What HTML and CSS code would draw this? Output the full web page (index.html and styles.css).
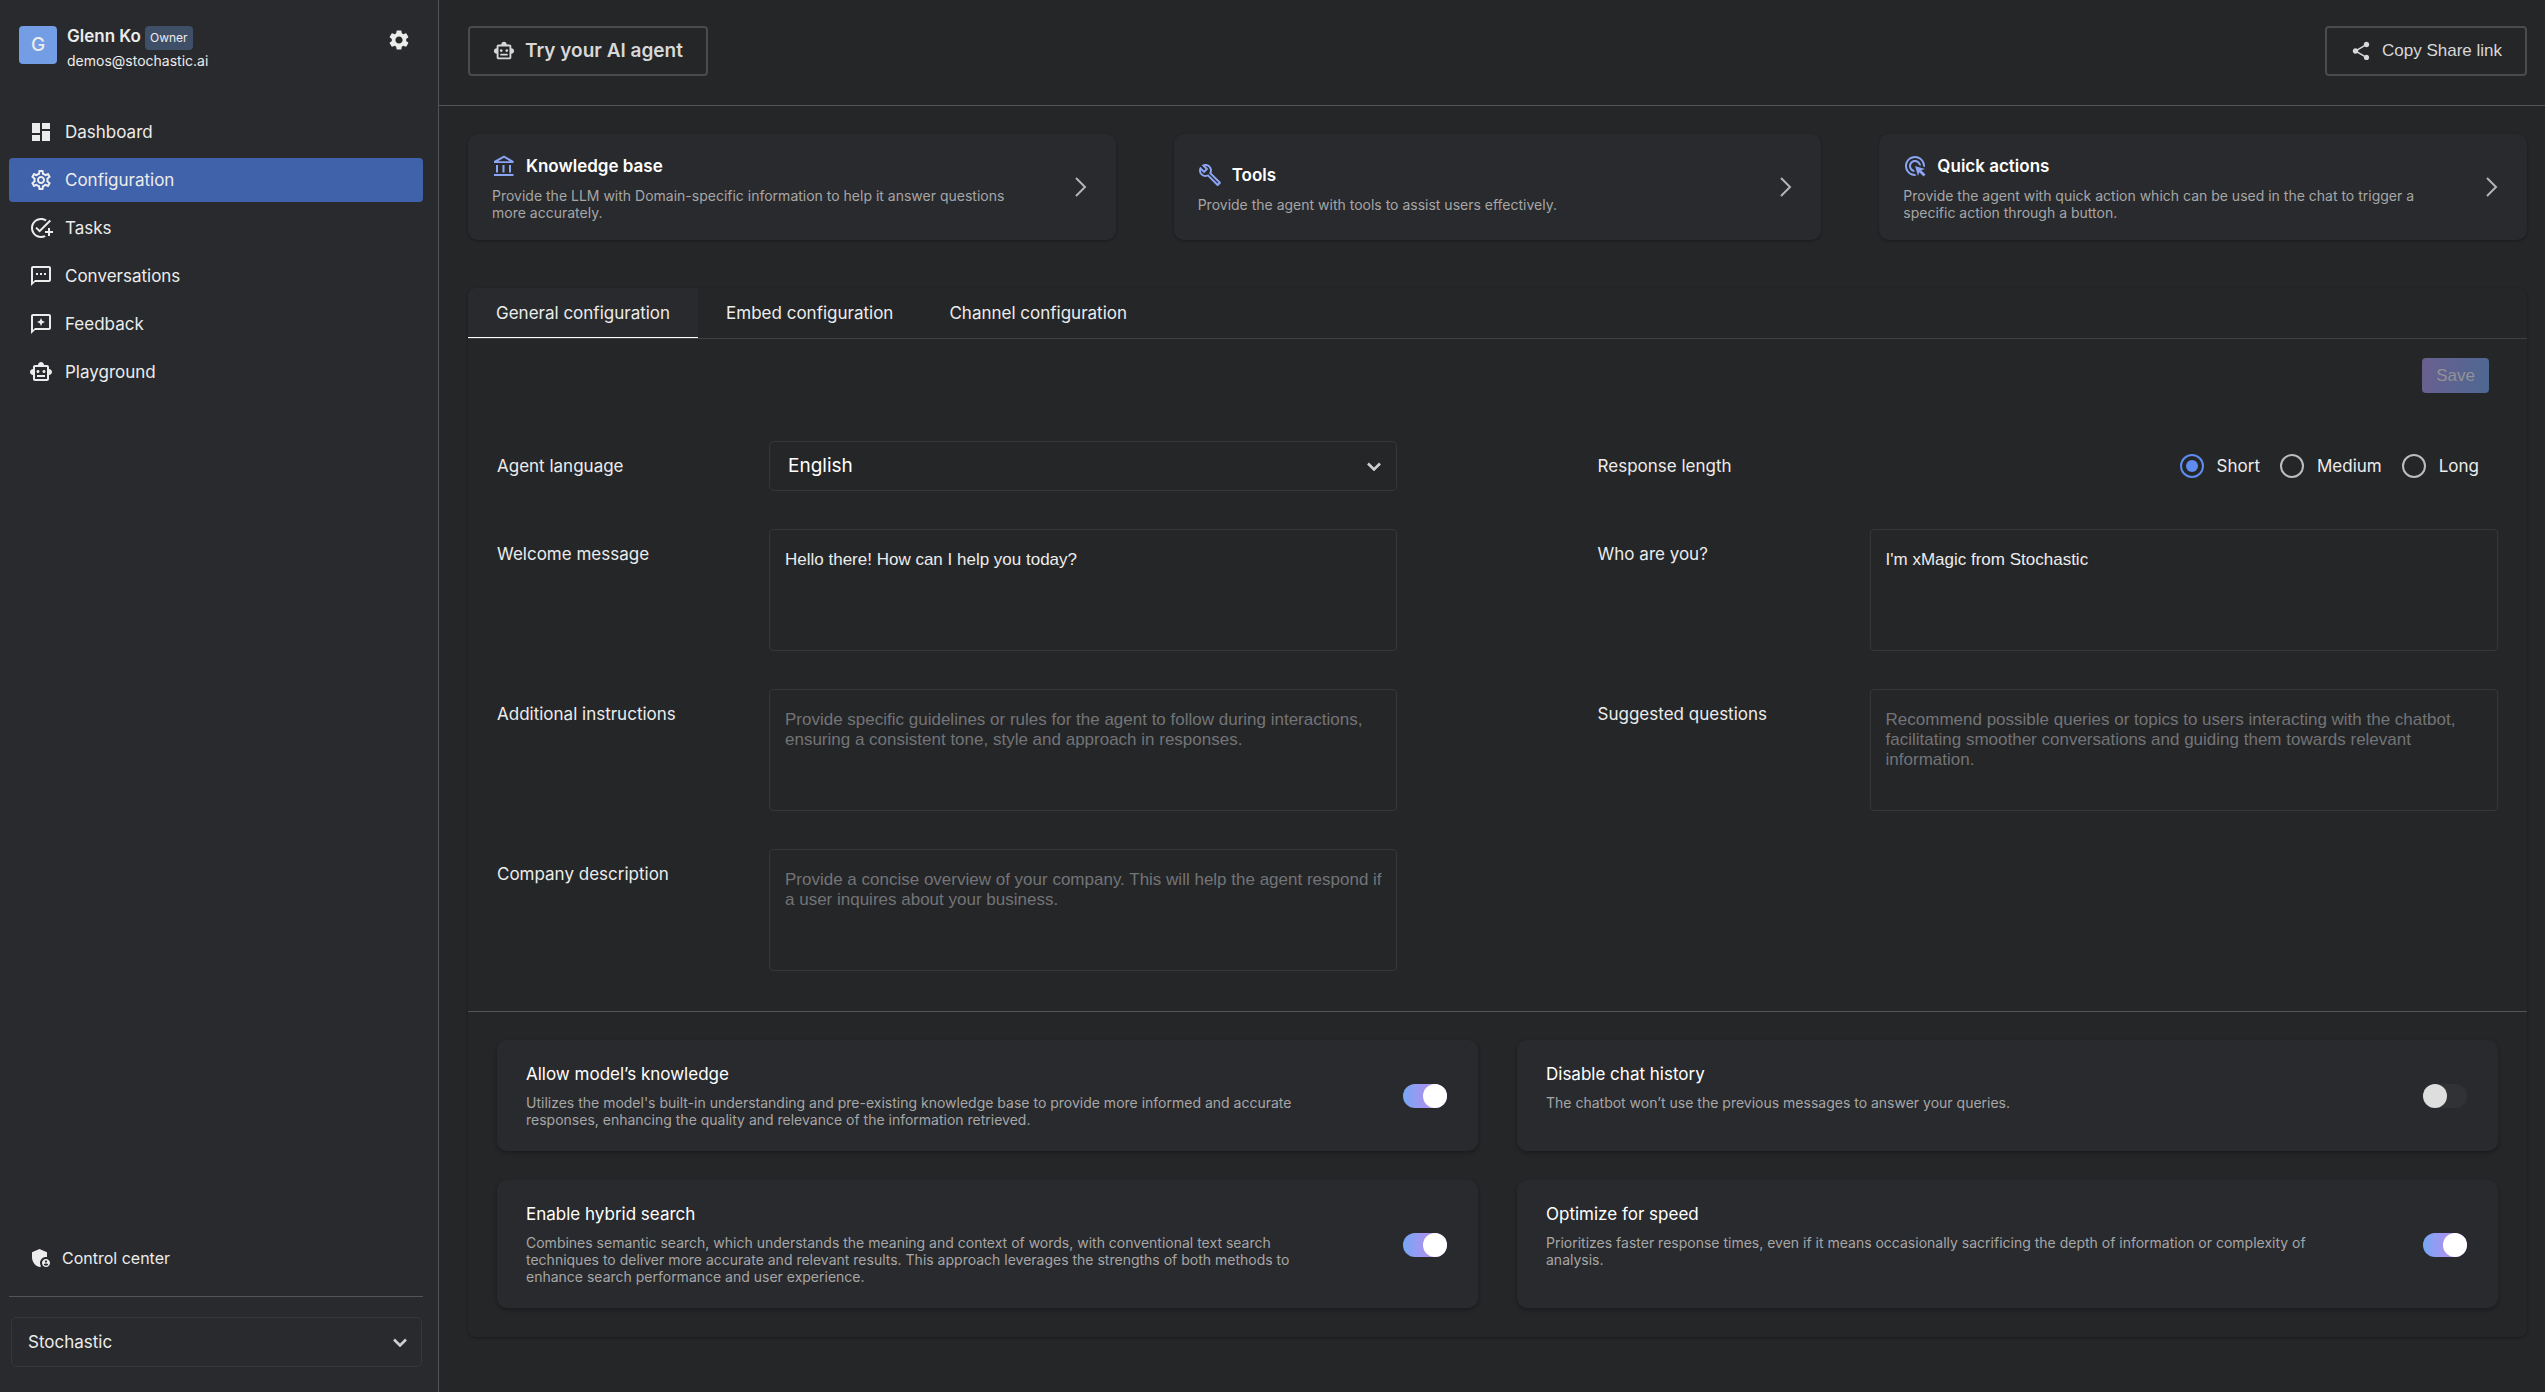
FILE: index.html
```html
<!DOCTYPE html>
<html lang="en">
<head>
<meta charset="utf-8">
<meta name="viewport" content="width=device-width, initial-scale=1">
<title>Configuration</title>
<link rel="stylesheet" href="styles.css">
</head>
<body>
<svg class="sprite" aria-hidden="true">
  <symbol id="i-robot" viewBox="0 0 24 24"><path d="M20 9V7c0-1.1-.9-2-2-2h-3c0-1.66-1.34-3-3-3S9 3.34 9 5H6c-1.1 0-2 .9-2 2v2c-1.66 0-3 1.34-3 3s1.34 3 3 3v4c0 1.1.9 2 2 2h12c1.1 0 2-.9 2-2v-4c1.66 0 3-1.34 3-3s-1.34-3-3-3zm-2 10H6V7h12v12zm-9-6c-.83 0-1.5-.67-1.5-1.5S8.17 10 9 10s1.5.67 1.5 1.5S9.83 13 9 13zm7.5-1.5c0 .83-.67 1.5-1.5 1.5s-1.5-.67-1.5-1.5.67-1.5 1.5-1.5 1.5.67 1.5 1.5zM8 15h8v2H8v-2z"/></symbol>
  <symbol id="i-next" viewBox="0 0 12 20"><path d="M1 1l9 9-9 9" fill="none" stroke="currentColor" stroke-width="2"/></symbol>
  <symbol id="i-down" viewBox="0 0 14 9"><path d="M1 1.500l6 6 6-6" fill="none" stroke="currentColor" stroke-width="2.600"/></symbol>
</svg>
<div class="app">
  <aside class="sidebar">
    <div class="profile">
      <span class="avatar">G</span>
      <div class="who">
        <div class="who-row"><span class="who-name">Glenn Ko</span><span class="badge">Owner</span></div>
        <div class="who-mail">demos@stochastic.ai</div>
      </div>
      <button class="icon-button" type="button" aria-label="Settings"><svg class="icon" viewBox="0 0 24 24"><path d="M19.14 12.94c.04-.3.06-.61.06-.94 0-.32-.02-.64-.07-.94l2.03-1.58c.18-.14.23-.41.12-.61l-1.92-3.32c-.12-.22-.37-.29-.59-.22l-2.39.96c-.5-.38-1.03-.7-1.62-.94l-.36-2.54c-.04-.24-.24-.41-.48-.41h-3.84c-.24 0-.43.17-.47.41l-.36 2.54c-.59.24-1.13.57-1.62.94l-2.39-.96c-.22-.08-.47 0-.59.22L2.74 8.87c-.12.21-.08.47.12.61l2.03 1.58c-.05.3-.09.63-.09.94s.02.64.07.94l-2.03 1.58c-.18.14-.23.41-.12.61l1.92 3.32c.12.22.37.29.59.22l2.39-.96c.5.38 1.03.7 1.62.94l.36 2.54c.05.24.24.41.48.41h3.84c.24 0 .44-.17.47-.41l.36-2.54c.59-.24 1.13-.56 1.62-.94l2.39.96c.22.08.47 0 .59-.22l1.92-3.32c.12-.22.07-.47-.12-.61l-2.01-1.58zM12 15.6c-1.980 0-3.600-1.620-3.600-3.600s1.620-3.600 3.600-3.600 3.600 1.620 3.600 3.600-1.620 3.600-3.600 3.600z"/></svg></button>
    </div>
    <nav class="nav" aria-label="Main">
      <a class="nav-item" href="#dashboard"><svg class="icon" viewBox="0 0 24 24"><path d="M3 13h8V3H3v10zm0 8h8v-6H3v6zm10 0h8V11h-8v10zm0-18v6h8V3h-8z"/></svg>Dashboard</a>
      <a class="nav-item nav-item-active" href="#configuration" aria-current="page"><svg class="icon" viewBox="0 0 24 24"><path d="M19.43 12.98c.04-.32.07-.64.07-.98 0-.34-.03-.66-.07-.98l2.11-1.65c.19-.15.24-.42.12-.64l-2-3.46c-.09-.16-.26-.25-.44-.25-.06 0-.12.01-.17.03l-2.49 1c-.52-.4-1.08-.73-1.69-.98l-.38-2.65C14.46 2.18 14.25 2 14 2h-4c-.25 0-.46.18-.49.42l-.38 2.65c-.61.25-1.17.59-1.69.98l-2.49-1c-.06-.02-.12-.03-.18-.03-.17 0-.34.09-.43.25l-2 3.46c-.13.22-.07.49.12.64l2.11 1.65c-.04.32-.07.65-.07.98 0 .33.03.66.07.98l-2.11 1.65c-.19.15-.24.42-.12.64l2 3.46c.09.16.26.25.44.25.06 0 .12-.01.17-.03l2.49-1c.52.4 1.08.73 1.69.98l.38 2.65c.03.24.24.42.49.42h4c.25 0 .46-.18.49-.42l.38-2.65c.61-.25 1.17-.59 1.69-.98l2.49 1c.06.02.12.03.18.03.17 0 .34-.09.43-.25l2-3.46c.12-.22.07-.49-.12-.64l-2.11-1.65zm-1.98-1.71c.04.31.05.52.05.73 0 .21-.02.43-.05.73l-.14 1.13.89.7 1.08.84-.7 1.21-1.27-.51-1.04-.42-.9.68c-.43.32-.84.56-1.25.73l-1.06.43-.16 1.13-.2 1.35h-1.4l-.19-1.35-.16-1.13-1.06-.43c-.43-.18-.83-.41-1.23-.71l-.91-.7-1.06.43-1.27.51-.7-1.21 1.08-.84.89-.7-.14-1.13c-.03-.31-.05-.54-.05-.74s.02-.43.05-.73l.14-1.13-.89-.7-1.08-.84.7-1.21 1.27.51 1.04.42.9-.68c.43-.32.84-.56 1.25-.73l1.06-.43.16-1.13.2-1.35h1.39l.19 1.35.16 1.13 1.06.43c.43.18.83.41 1.23.71l.91.7 1.06-.43 1.27-.51.7 1.21-1.07.85-.89.7.14 1.13zM12 8c-2.21 0-4 1.79-4 4s1.79 4 4 4 4-1.79 4-4-1.79-4-4-4zm0 6c-1.1 0-2-.9-2-2s.9-2 2-2 2 .9 2 2-.9 2-2 2z"/></svg>Configuration</a>
      <a class="nav-item" href="#tasks"><svg class="icon" viewBox="0 0 24 24"><path d="M22 5.18 10.59 16.6l-4.24-4.24 1.41-1.41 2.83 2.83 10-10L22 5.18zM12 20c-4.42 0-8-3.58-8-8s3.58-8 8-8c1.57 0 3.04.46 4.28 1.25l1.45-1.45C16.1 2.67 14.13 2 12 2 6.48 2 2 6.48 2 12s4.48 10 10 10c1.73 0 3.36-.44 4.78-1.22l-1.5-1.5c-1 .46-2.11.72-3.28.72zm7-5h-3v2h3v3h2v-3h3v-2h-3v-3h-2v3z"/></svg>Tasks</a>
      <a class="nav-item" href="#conversations"><svg class="icon" viewBox="0 0 24 24"><path d="M20 2H4c-1.1 0-2 .9-2 2v18l4-4h14c1.1 0 2-.9 2-2V4c0-1.1-.9-2-2-2zm0 14H6l-2 2V4h16v12zM7 9h2v2H7zm4 0h2v2h-2zm4 0h2v2h-2z"/></svg>Conversations</a>
      <a class="nav-item" href="#feedback"><svg class="icon" viewBox="0 0 24 24"><path d="M20 2H4c-1.1 0-2 .9-2 2v18l4-4h14c1.1 0 2-.9 2-2V4c0-1.1-.9-2-2-2zm0 14H6l-2 2V4h16v12zM12 14l1.250-2.750L16 10l-2.750-1.250L12 6l-1.250 2.750L8 10l2.750 1.250z"/></svg>Feedback</a>
      <a class="nav-item" href="#playground"><svg class="icon"><use href="#i-robot"/></svg>Playground</a>
    </nav>
    <div class="sidebar-foot">
      <a class="nav-item nav-item-foot" href="#control-center"><svg class="icon" viewBox="0 0 24 24"><path d="M17 11c.34 0 .67.04 1 .09V6.27L10.5 3 3 6.27v4.91c0 4.54 3.2 8.79 7.5 9.820.550-.130 1.080-.320 1.600-.550-.690-.980-1.100-2.170-1.100-3.450 0-3.310 2.690-6 6-6z"/><path fill-rule="evenodd" d="M17 13c-2.210 0-4 1.790-4 4s1.790 4 4 4 4-1.790 4-4-1.790-4-4-4zm0 1.380c.620 0 1.120.510 1.120 1.120s-.510 1.120-1.120 1.120-1.120-.510-1.120-1.120.500-1.120 1.120-1.120zm0 5.370c-.930 0-1.740-.460-2.240-1.170.050-.720 1.510-1.080 2.240-1.080s2.190.360 2.240 1.080c-.500.710-1.310 1.170-2.240 1.170z"/></svg>Control center</a>
      <div class="select workspace">
        <select class="select-box" aria-label="Workspace"><option>Stochastic</option></select>
        <svg class="select-arrow"><use href="#i-down"/></svg>
      </div>
    </div>
  </aside>

  <main class="main">
    <header class="topbar">
      <button class="button button-strong" type="button"><svg class="button-icon"><use href="#i-robot"/></svg>Try your AI agent</button>
      <button class="button" type="button"><svg class="button-icon" viewBox="0 0 24 24"><path d="M18 16.08c-.76 0-1.44.3-1.96.77L8.91 12.7c.05-.23.09-.46.09-.7s-.04-.47-.09-.7l7.05-4.11c.54.5 1.25.81 2.04.81 1.66 0 3-1.34 3-3s-1.34-3-3-3-3 1.34-3 3c0 .24.04.47.09.7L8.04 9.81C7.5 9.31 6.79 9 6 9c-1.66 0-3 1.34-3 3s1.34 3 3 3c.79 0 1.5-.31 2.04-.81l7.12 4.16c-.05.21-.08.43-.08.65 0 1.61 1.31 2.92 2.92 2.92s2.92-1.31 2.92-2.92-1.31-2.92-2.92-2.92z"/></svg>Copy Share link</button>
    </header>

    <div class="content">
      <section class="shortcuts">
        <a class="shortcut" href="#knowledge-base">
          <div class="shortcut-text">
            <h2 class="shortcut-title"><svg class="icon icon-accent" viewBox="0 0 24 24"><path fill-rule="evenodd" d="M12 1.500 2 7v2h19.500V7L12 1.500zM6 7.200 12 3.800l5.800 3.400z"/><path d="M4 11h2v7.500H4zM10.500 11h2v7.500h-2zM17 11h2v7.500h-2zM2 20h19.500v2H2z"/></svg>Knowledge base</h2>
            <p class="desc">Provide the LLM with Domain-specific information to help it answer questions more accurately.</p>
          </div>
          <svg class="shortcut-arrow"><use href="#i-next"/></svg>
        </a>
        <a class="shortcut" href="#tools">
          <div class="shortcut-text">
            <h2 class="shortcut-title"><svg class="icon icon-accent" viewBox="0 0 24 24"><path d="M22.61 18.99l-9.08-9.08c.93-2.34.45-5.1-1.44-7C9.79.61 6.21.4 3.66 2.26L7.5 6.11 6.08 7.52 2.25 3.69C.39 6.23.6 9.82 2.9 12.11c1.86 1.86 4.57 2.35 6.89 1.48l9.11 9.11c.39.39 1.02.39 1.41 0l2.3-2.3c.4-.38.4-1.01 0-1.41zm-3 1.6l-9.46-9.46c-.61.45-1.29.72-2 .82-1.36.2-2.79-.21-3.83-1.25C3.37 9.76 2.93 8.5 3 7.26l3.09 3.09 4.24-4.24-3.09-3.09c1.24-.07 2.49.37 3.44 1.31 1.08 1.08 1.49 2.57 1.24 3.96-.12.71-.42 1.37-.88 1.96l9.45 9.45-.88.89z"/></svg>Tools</h2>
            <p class="desc">Provide the agent with tools to assist users effectively.</p>
          </div>
          <svg class="shortcut-arrow"><use href="#i-next"/></svg>
        </a>
        <a class="shortcut" href="#quick-actions">
          <div class="shortcut-text">
            <h2 class="shortcut-title"><svg class="icon icon-accent" viewBox="0 0 24 24"><path d="M11.71 17.99C8.53 17.84 6 15.22 6 12c0-3.31 2.69-6 6-6 3.22 0 5.84 2.53 5.99 5.71l-2.1-.63C15.48 9.31 13.89 8 12 8c-2.21 0-4 1.79-4 4 0 1.89 1.31 3.48 3.08 3.89l.63 2.1zM22 12c0 .3-.01.6-.04.9l-1.97-.59c.01-.1.01-.21.01-.31 0-4.42-3.58-8-8-8s-8 3.58-8 8 3.58 8 8 8c.1 0 .21 0 .31-.01l.59 1.97c-.3.03-.6.04-.9.04-5.52 0-10-4.48-10-10S6.48 2 12 2s10 4.48 10 10zm-3.77 4.26L22 15l-10-3 3 10 1.26-3.77 4.27 4.27 1.98-1.98-4.28-4.26z"/></svg>Quick actions</h2>
            <p class="desc">Provide the agent with quick action which can be used in the chat to trigger a specific action through a button.</p>
          </div>
          <svg class="shortcut-arrow"><use href="#i-next"/></svg>
        </a>
      </section>

      <section class="panel">
        <div class="tabs" role="tablist">
          <button class="tab tab-active" type="button" role="tab" aria-selected="true">General configuration</button>
          <button class="tab" type="button" role="tab" aria-selected="false">Embed configuration</button>
          <button class="tab" type="button" role="tab" aria-selected="false">Channel configuration</button>
        </div>

        <form class="form">
          <div class="form-actions"><button class="save" type="submit" disabled>Save</button></div>
          <div class="fields">
            <div class="field field-center">
              <label class="field-label" for="language">Agent language</label>
              <div class="select">
                <select class="select-box select-large" id="language"><option>English</option></select>
                <svg class="select-arrow"><use href="#i-down"/></svg>
              </div>
            </div>
            <div class="field field-center" role="radiogroup" aria-labelledby="length-label">
              <span class="field-label" id="length-label">Response length</span>
              <div class="radios">
                <label class="radio"><input class="radio-input" type="radio" name="length" checked>Short</label>
                <label class="radio"><input class="radio-input" type="radio" name="length">Medium</label>
                <label class="radio"><input class="radio-input" type="radio" name="length">Long</label>
              </div>
            </div>
            <div class="field">
              <label class="field-label" for="welcome">Welcome message</label>
              <textarea class="textarea" id="welcome">Hello there! How can I help you today?</textarea>
            </div>
            <div class="field">
              <label class="field-label" for="identity">Who are you?</label>
              <textarea class="textarea" id="identity">I'm xMagic from Stochastic</textarea>
            </div>
            <div class="field">
              <label class="field-label" for="instructions">Additional instructions</label>
              <textarea class="textarea" id="instructions" placeholder="Provide specific guidelines or rules for the agent to follow during interactions, ensuring a consistent tone, style and approach in responses."></textarea>
            </div>
            <div class="field">
              <label class="field-label" for="questions">Suggested questions</label>
              <textarea class="textarea" id="questions" placeholder="Recommend possible queries or topics to users interacting with the chatbot, facilitating smoother conversations and guiding them towards relevant information."></textarea>
            </div>
            <div class="field">
              <label class="field-label" for="company">Company description</label>
              <textarea class="textarea" id="company" placeholder="Provide a concise overview of your company. This will help the agent respond if a user inquires about your business."></textarea>
            </div>
          </div>

          <div class="options">
            <label class="option">
              <span class="option-text">
                <span class="option-title">Allow model’s knowledge</span>
                <span class="desc">Utilizes the model's built-in understanding and pre-existing knowledge base to provide more informed and accurate responses, enhancing the quality and relevance of the information retrieved.</span>
              </span>
              <input class="switch" type="checkbox" role="switch" checked>
            </label>
            <label class="option">
              <span class="option-text">
                <span class="option-title">Disable chat history</span>
                <span class="desc">The chatbot won’t use the previous messages to answer your queries.</span>
              </span>
              <input class="switch" type="checkbox" role="switch">
            </label>
            <label class="option">
              <span class="option-text">
                <span class="option-title">Enable hybrid search</span>
                <span class="desc">Combines semantic search, which understands the meaning and context of words, with conventional text search techniques to deliver more accurate and relevant results. This approach leverages the strengths of both methods to enhance search performance and user experience.</span>
              </span>
              <input class="switch" type="checkbox" role="switch" checked>
            </label>
            <label class="option">
              <span class="option-text">
                <span class="option-title">Optimize for speed</span>
                <span class="desc">Prioritizes faster response times, even if it means occasionally sacrificing the depth of information or complexity of analysis.</span>
              </span>
              <input class="switch" type="checkbox" role="switch" checked>
            </label>
          </div>
        </form>
      </section>
    </div>
  </main>
</div>
</body>
</html>
```
FILE: styles.css
```css
:root {
  --bg: #252628;
  --surface: #292a2d;
  --line: #535457;
  --line-soft: #36373a;
  --text: #ececec;
  --muted: #a6a6a7;
  --accent: #8ca4f4;
}

* { box-sizing: border-box; }

body {
  margin: 0;
  background: var(--bg);
  color: var(--text);
  font: 17px/20px Inter, sans-serif;
}

button, select, textarea, input { font: inherit; color: inherit; margin: 0; }
a { color: inherit; text-decoration: none; }
h2, p { margin: 0; }

.sprite { position: absolute; width: 0; height: 0; }
.icon { width: 24px; height: 24px; flex: none; fill: currentColor; }
.icon-accent { color: var(--accent); }

.app { display: flex; min-height: 100vh; }

/* Sidebar */
.sidebar {
  position: sticky;
  top: 0;
  display: flex;
  flex-direction: column;
  flex: none;
  width: 439px;
  height: 100vh;
  padding: 26px 15px 25px 9px;
  background: var(--surface);
  border-right: 1px solid var(--line);
}

.profile { display: flex; align-items: flex-start; padding: 0 12px 0 10px; }
.avatar {
  display: grid;
  place-items: center;
  width: 38px;
  height: 38px;
  margin-right: 10px;
  border-radius: 4px;
  background: #739de5;
  font-size: 19px;
  font-weight: 500;
}
.who { flex: 1; }
.who-row { display: flex; align-items: flex-start; gap: 4px; height: 26px; }
.who-name { font-weight: 600; }
.badge {
  padding: 0 5px;
  border-radius: 4px;
  background: #3f4f68;
  font-size: 12px;
  line-height: 24px;
}
.who-mail { font-size: 14px; line-height: 18px; }
.icon-button { display: flex; margin-top: 2px; padding: 0; border: 0; background: none; cursor: pointer; }

.nav { display: flex; flex-direction: column; gap: 4px; margin-top: 40px; }
.nav-item {
  display: flex;
  align-items: center;
  gap: 12px;
  height: 44px;
  padding: 0 20px;
  border-radius: 4px;
}
.nav-item-active { background: #4062ab; }

.sidebar-foot { margin-top: auto; }
.nav-item-foot { gap: 9px; font-size: 16px; }
.workspace { margin-top: 16px; padding: 20px 1px 0 2px; border-top: 1px solid var(--line); }

.select { position: relative; }
.select-box {
  display: block;
  appearance: none;
  width: 100%;
  height: 50px;
  padding: 0 16px;
  border: 1px solid var(--line-soft);
  border-radius: 5px;
  background: transparent;
}
.select-large { padding: 0 18px; font-size: 19px; color: #fff; }
.select-arrow {
  position: absolute;
  right: 16px;
  bottom: 20px;
  width: 14px;
  height: 9px;
  color: #cfcfcf;
  pointer-events: none;
}

/* Top bar */
.main { flex: 1; min-width: 0; }
.topbar {
  display: flex;
  justify-content: space-between;
  padding: 26px 18px 29px 29px;
  border-bottom: 1px solid var(--line);
}
.button {
  display: flex;
  align-items: center;
  gap: 10px;
  height: 50px;
  padding: 0 23px;
  border: 2px solid #4a4b4d;
  border-radius: 4px;
  background: transparent;
  color: #d8d8d8;
  font-family: "Liberation Sans", sans-serif;
  cursor: pointer;
}
.button-strong { font: 600 19px/20px Inter, sans-serif; }
.button-icon { width: 22px; height: 22px; fill: currentColor; }

.content { padding: 28px 18px 48px 29px; }

/* Shortcut cards */
.shortcuts { display: grid; grid-template-columns: repeat(3, 1fr); gap: 58px; }
.shortcut {
  display: flex;
  align-items: center;
  justify-content: space-between;
  gap: 40px;
  min-height: 106px;
  padding: 18px 29px 18px 24px;
  border-radius: 10px;
  background: var(--surface);
  box-shadow: 0 1px 3px rgba(0, 0, 0, .3);
}
.shortcut-title {
  display: flex;
  align-items: center;
  gap: 10px;
  height: 26px;
  margin-bottom: 8px;
  color: #fff;
  font-size: 17px;
  font-weight: 600;
}
.shortcut-arrow { flex: none; width: 12px; height: 20px; color: #b4b4b4; }
.desc { color: var(--muted); font-size: 14px; line-height: 17px; }

/* Panel and tabs */
.panel {
  margin-top: 48px;
  border-radius: 8px;
  box-shadow: 0 1px 3px rgba(0, 0, 0, .3);
}
.tabs { display: flex; border-bottom: 1px solid #404144; }
.tab {
  height: 50px;
  padding: 0 28px;
  border: 0;
  border-bottom: 1px solid transparent;
  background: none;
  cursor: pointer;
}
.tab-active { border-color: #fff; border-radius: 8px 0 0 0; background: var(--surface); }

/* Form */
.form-actions { display: flex; justify-content: flex-end; padding: 19px 38px 0; }
.save {
  height: 35px;
  padding: 0 14px;
  border: 0;
  border-radius: 4px;
  background: linear-gradient(100deg, #6a5f8f, #4d6892);
  color: #929296;
  font-family: "Liberation Sans", sans-serif;
}
.fields {
  display: grid;
  grid-template-columns: 45% 45%;
  justify-content: space-between;
  row-gap: 38px;
  padding: 48px 29px 40px;
}
.field { display: grid; grid-template-columns: 272px 1fr; align-items: start; }
.field-center { align-items: center; }
.field-label { padding-top: 15px; }
.field-center .field-label { padding-top: 0; }
.textarea {
  display: block;
  width: 100%;
  height: 122px;
  padding: 20px 12px 18px 15px;
  border: 1px solid var(--line-soft);
  border-radius: 4px;
  background: transparent;
  font-family: "Liberation Sans", sans-serif;
  resize: none;
}
.textarea::placeholder { color: #737477; opacity: 1; }

.radios { display: flex; justify-content: flex-end; gap: 20px; padding-right: 19px; }
.radio { display: flex; align-items: center; gap: 13px; }
.radio-input {
  display: grid;
  place-items: center;
  appearance: none;
  width: 24px;
  height: 24px;
  border: 2px solid #bdbdbe;
  border-radius: 50%;
}
.radio-input:checked { border-color: #5f8cf0; }
.radio-input:checked::before {
  content: "";
  width: 12px;
  height: 12px;
  border-radius: 50%;
  background: #5f8cf0;
}

/* Option cards */
.options {
  display: grid;
  grid-template-columns: 1fr 1fr;
  gap: 29px 39px;
  padding: 28px 29px 29px;
  border-top: 1px solid var(--line);
}
.option {
  display: flex;
  justify-content: space-between;
  align-items: center;
  padding: 24px 31px 23px 29px;
  border-radius: 10px;
  background: var(--surface);
  box-shadow: 0 2px 4px rgba(0, 0, 0, .3);
}
.option-text { display: flex; flex-direction: column; gap: 10px; align-self: flex-start; width: 88%; }
.option-title { color: #fff; }
.switch {
  appearance: none;
  display: flex;
  flex: none;
  width: 44px;
  height: 24px;
  border-radius: 12px;
  background: #313236;
}
.switch::before {
  content: "";
  width: 24px;
  height: 24px;
  border-radius: 50%;
  background: #dedede;
}
.switch:checked { justify-content: flex-end; background: linear-gradient(90deg, #76a8f4, #b98cf0 70%); }
.switch:checked::before { background: #fff; }
```
